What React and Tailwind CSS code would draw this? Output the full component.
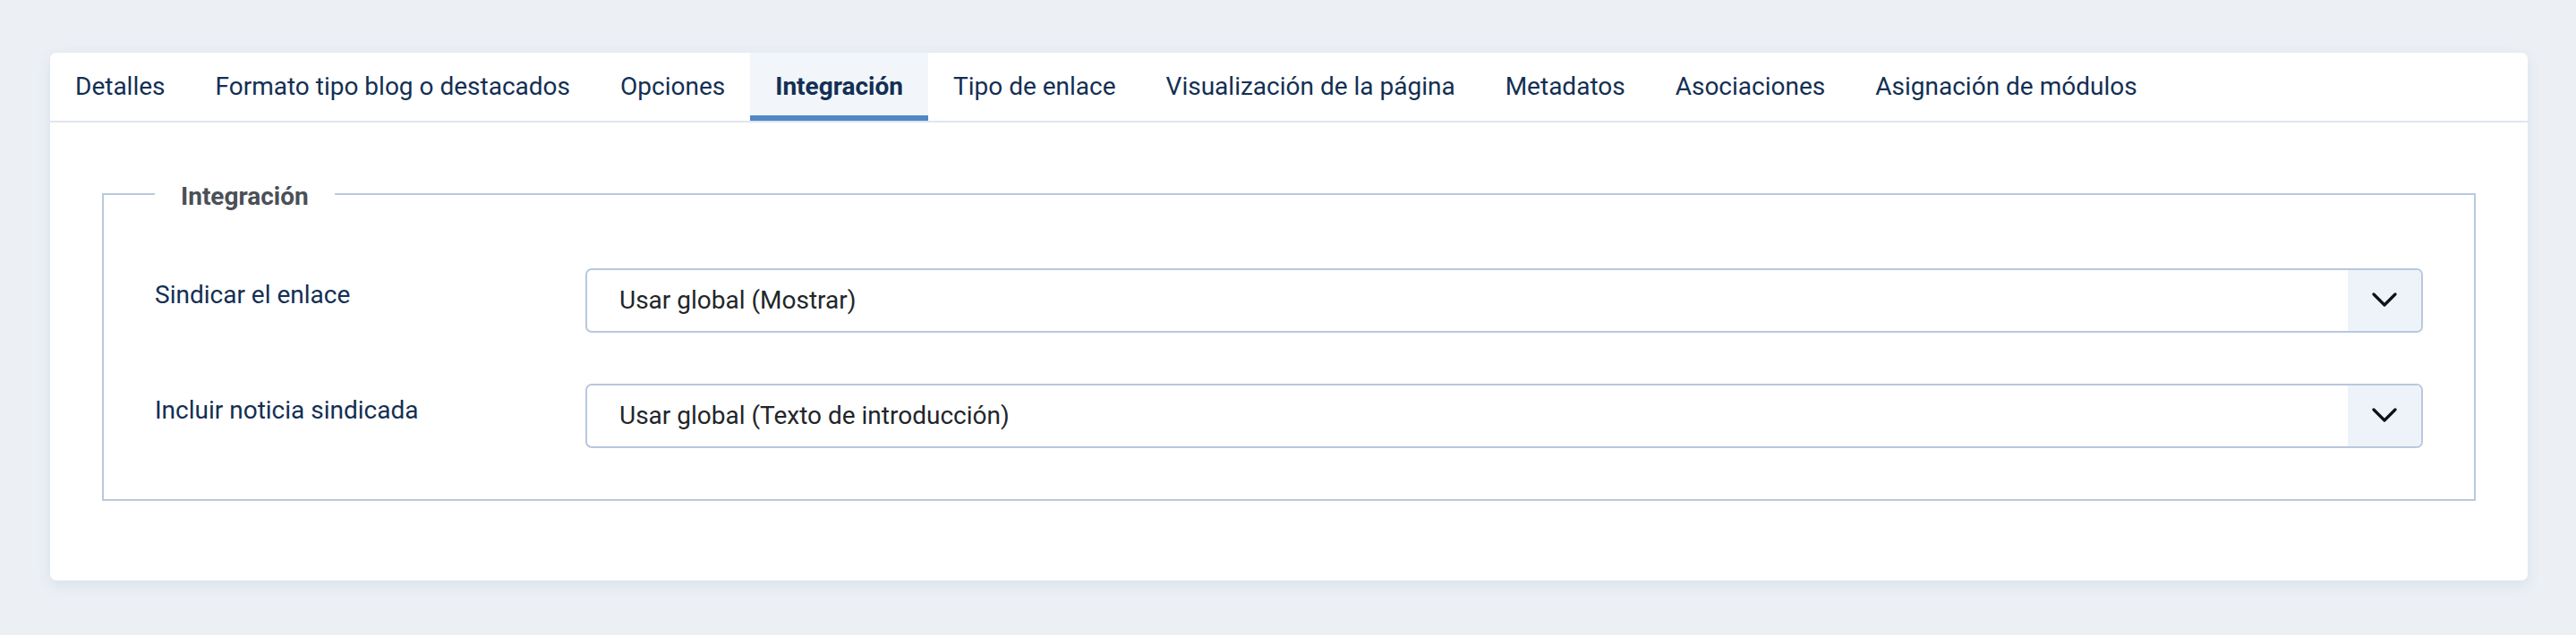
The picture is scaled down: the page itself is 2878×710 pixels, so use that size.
const tabs = [
  'Detalles',
  'Formato tipo blog o destacados',
  'Opciones',
  'Integración',
  'Tipo de enlace',
  'Visualización de la página',
  'Metadatos',
  'Asociaciones',
  'Asignación de módulos',
]

const fields = [
  { label: 'Sindicar el enlace', value: 'Usar global (Mostrar)' },
  { label: 'Incluir noticia sindicada', value: 'Usar global (Texto de introducción)' },
]

function SelectBox({ value }) {
  return (
    <div className="flex-1 flex h-[72px] items-stretch rounded-[7px] border-2 border-[#b8c8dd] bg-white overflow-hidden">
      <div className="flex-1 flex items-center pl-[36px] text-[#22262a] leading-[42px]">{value}</div>
      {/* chevron */}
      <div className="w-[82px] flex items-center justify-center bg-[#eef3fa]">
        <svg width="28" height="17" viewBox="0 0 28 17" fill="none">
          <polyline points="2,2 14,14 26,2" stroke="#111" strokeWidth="3.2" strokeLinecap="round" strokeLinejoin="round" />
        </svg>
      </div>
    </div>
  )
}

export default function App() {
  const active = 'Integración'

  return (
    <div className="min-h-[710px] bg-[#ecf0f5] pt-[59px] pl-[56px] pr-[54px] pb-[61px] font-['Roboto','Liberation_Sans',sans-serif] text-[28px]">
      <div className="bg-white rounded-[7px] shadow-[0_5px_16px_rgba(40,75,135,0.09)]">
        {/* Tabs */}
        <div className="flex h-[78px] border-b-2 border-[#dfe6f0]">
          {tabs.map((t) => (
            <div
              key={t}
              className={
                t === active
                  ? 'flex items-center px-[28px] leading-[42px] font-bold text-[#132f53] bg-[#f2f6fa] shadow-[inset_0_-6px_0_#5087c7]'
                  : 'flex items-center px-[28px] leading-[42px] text-[#132f53]'
              }
            >
              {t}
            </div>
          ))}
        </div>

        {/* Body */}
        <div className="px-[58px] pt-[61px] pb-[89px]">
          <fieldset className="border-2 border-[#b9c9dd] pl-[57px] pr-[57px] pt-[63px] pb-[57px]">
            <legend className="px-[29px] pt-[6px] font-bold text-[#4a5057] leading-[1.172]">Integración</legend>
            <div className="flex flex-col gap-[57px]">
              {fields.map((f) => (
                <div key={f.label} className="flex items-start">
                  <div className="w-[481px] pt-[9px] leading-[42px] text-[#132f53]">{f.label}</div>
                  <SelectBox value={f.value} />
                </div>
              ))}
            </div>
          </fieldset>
        </div>
      </div>
    </div>
  )
}
